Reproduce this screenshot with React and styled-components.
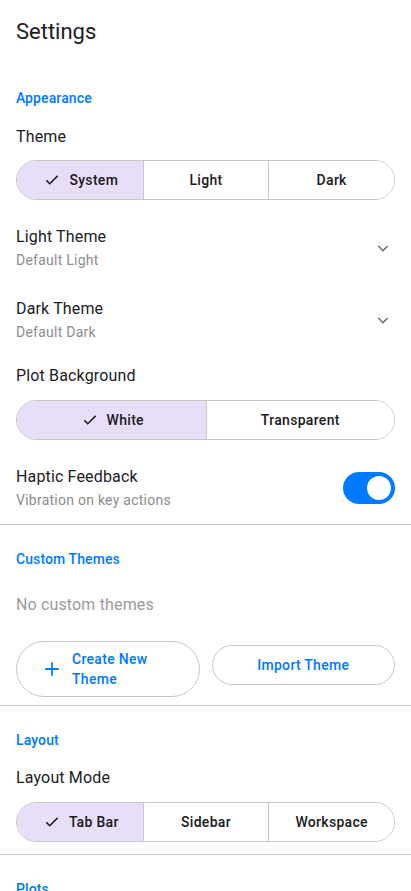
import React, { useState } from "react";
import styled, { createGlobalStyle } from "styled-components";

const GlobalStyle = createGlobalStyle`
  html, body {
    margin: 0;
    padding: 0;
    background: #fff;
  }
  body {
    font-family: Roboto, "Noto Sans", "Liberation Sans", sans-serif;
    color: #1c1b1f;
    overflow: hidden;
  }
  * {
    box-sizing: border-box;
  }
`;

const medium = `"Roboto Medium", Roboto, "Noto Sans", "Liberation Sans", sans-serif`;

const Page = styled.div`
  width: 411px;
  display: flex;
  flex-direction: column;
`;

const Header = styled.div`
  padding: 18px 16px 18px;
`;

const PageTitle = styled.h1`
  margin: 0;
  font-size: 22px;
  line-height: 28px;
  font-weight: 400;
  color: #1c1b1f;
`;

const Section = styled.section`
  display: flex;
  flex-direction: column;
  padding: 24px 16px ${(p) => p.$pb || 0}px;
  border-bottom: ${(p) => (p.$last ? "none" : "1px solid #cac4d0")};
`;

const SectionTitle = styled.div`
  font-family: ${medium};
  font-size: 14px;
  line-height: 20px;
  font-weight: 500;
  letter-spacing: 0.1px;
  color: #007aff;
`;

const Label = styled.div`
  margin-top: ${(p) => p.$mt}px;
  font-size: 16px;
  line-height: 24px;
  letter-spacing: 0.15px;
  color: #1c1b1f;
`;

const Muted = styled.div`
  margin-top: ${(p) => p.$mt}px;
  font-size: 16px;
  line-height: 24px;
  letter-spacing: 0.15px;
  color: #9a9a9a;
`;

const Segmented = styled.div`
  margin-top: ${(p) => p.$mt}px;
  display: grid;
  grid-template-columns: repeat(${(p) => p.$count}, 1fr);
  height: 40px;
  border: 1px solid #c7c7c7;
  border-radius: 20px;
  overflow: hidden;
`;

const Segment = styled.button`
  display: flex;
  align-items: center;
  justify-content: center;
  gap: 8px;
  border: none;
  border-left: ${(p) => (p.$first ? "none" : "1px solid #c7c7c7")};
  background: ${(p) => (p.$active ? "#e8def8" : "#fff")};
  font-family: ${medium};
  font-size: 14px;
  font-weight: 500;
  letter-spacing: 0.3px;
  color: #1c1b1f;
  padding: 0 0 0 ${(p) => (p.$active ? 2 : 0)}px;
  cursor: pointer;
`;

const Row = styled.div`
  margin-top: ${(p) => p.$mt}px;
  display: flex;
  align-items: center;
  justify-content: space-between;
  padding: 13px 0 11px;
`;

const RowText = styled.div`
  display: flex;
  flex-direction: column;
`;

const RowTitle = styled.div`
  font-size: 16px;
  line-height: 24px;
  letter-spacing: 0.15px;
  color: #1c1b1f;
`;

const RowSub = styled.div`
  margin-top: 1px;
  font-size: 14px;
  line-height: 20px;
  letter-spacing: 0.25px;
  color: #8c8c8c;
`;

const ChevronWrap = styled.div`
  width: 24px;
  height: 24px;
  display: flex;
  align-items: center;
  justify-content: center;
`;

const Switch = styled.button`
  width: 52px;
  height: 32px;
  border-radius: 16px;
  border: none;
  padding: 4px;
  background: ${(p) => (p.$on ? "#007aff" : "#e0e0e0")};
  display: flex;
  justify-content: ${(p) => (p.$on ? "flex-end" : "flex-start")};
  align-items: center;
  cursor: pointer;
`;

const Thumb = styled.span`
  width: 24px;
  height: 24px;
  border-radius: 50%;
  background: #fff;
`;

const ButtonRow = styled.div`
  margin-top: 24px;
  display: grid;
  grid-template-columns: 1fr 1fr;
  gap: 12px;
  align-items: start;
`;

const OutlineButton = styled.button`
  display: flex;
  align-items: center;
  justify-content: ${(p) => (p.$icon ? "flex-start" : "center")};
  gap: 11px;
  margin-top: ${(p) => p.$mt || 0}px;
  min-height: 40px;
  padding: ${(p) => (p.$icon ? "7px 24px 7px 26px" : "7px 16px")};
  border: 1px solid #c7c7c7;
  border-radius: 28px;
  background: #fff;
  font-family: ${medium};
  font-size: 14px;
  line-height: 20px;
  font-weight: 500;
  letter-spacing: 0.3px;
  color: #007aff;
  text-align: left;
  cursor: pointer;
`;

const ButtonLabel = styled.span`
  max-width: 95px;
`;

const Check = () => (
  <svg width="18" height="18" viewBox="0 0 24 24" fill="none">
    <path d="M4.5 12.5l4.5 4.5L19.5 6.5" stroke="#1c1b1f" strokeWidth="2" />
  </svg>
);

const Chevron = () => (
  <svg width="16" height="16" viewBox="0 0 24 24" fill="none">
    <path d="M5 9l7 7 7-7" stroke="#757575" strokeWidth="2.4" />
  </svg>
);

const Plus = () => (
  <svg width="18" height="18" viewBox="0 0 24 24" fill="none">
    <path d="M12 3v18M3 12h18" stroke="#007aff" strokeWidth="2.4" />
  </svg>
);

const SegmentedControl = ({ options, value, onChange, mt = 13 }) => (
  <Segmented $count={options.length} $mt={mt}>
    {options.map((o, i) => (
      <Segment
        key={o}
        $first={i === 0}
        $active={value === o}
        onClick={() => onChange(o)}
      >
        {value === o && <Check />}
        {o}
      </Segment>
    ))}
  </Segmented>
);

const SelectRow = ({ title, value, mt }) => (
  <Row $mt={mt}>
    <RowText>
      <RowTitle>{title}</RowTitle>
      <RowSub>{value}</RowSub>
    </RowText>
    <ChevronWrap>
      <Chevron />
    </ChevronWrap>
  </Row>
);

export default function App() {
  const [theme, setTheme] = useState("System");
  const [plotBg, setPlotBg] = useState("White");
  const [haptic, setHaptic] = useState(true);
  const [layout, setLayout] = useState("Tab Bar");

  return (
    <Page>
      <GlobalStyle />
      <Header>
        <PageTitle>Settings</PageTitle>
      </Header>

      <Section $pb={3}>
        <SectionTitle>Appearance</SectionTitle>
        <Label $mt={17}>Theme</Label>
        <SegmentedControl
          options={["System", "Light", "Dark"]}
          value={theme}
          onChange={setTheme}
          mt={11}
        />
        <SelectRow title="Light Theme" value="Default Light" mt={12} />
        <SelectRow title="Dark Theme" value="Default Dark" mt={3} />
        <Label $mt={11}>Plot Background</Label>
        <SegmentedControl
          options={["White", "Transparent"]}
          value={plotBg}
          onChange={setPlotBg}
          mt={12}
        />
        <Row $mt={12}>
          <RowText>
            <RowTitle>Haptic Feedback</RowTitle>
            <RowSub>Vibration on key actions</RowSub>
          </RowText>
          <Switch $on={haptic} onClick={() => setHaptic(!haptic)}>
            <Thumb />
          </Switch>
        </Row>
      </Section>

      <Section $pb={8}>
        <SectionTitle>Custom Themes</SectionTitle>
        <Muted $mt={24}>No custom themes</Muted>
        <ButtonRow>
          <OutlineButton $icon>
            <Plus />
            <ButtonLabel>Create New Theme</ButtonLabel>
          </OutlineButton>
          <OutlineButton $mt={4}>Import Theme</OutlineButton>
        </ButtonRow>
      </Section>

      <Section $pb={12}>
        <SectionTitle>Layout</SectionTitle>
        <Label $mt={16}>Layout Mode</Label>
        <SegmentedControl
          options={["Tab Bar", "Sidebar", "Workspace"]}
          value={layout}
          onChange={setLayout}
          mt={12}
        />
      </Section>

      <Section $last>
        <SectionTitle>Plots</SectionTitle>
      </Section>
    </Page>
  );
}
